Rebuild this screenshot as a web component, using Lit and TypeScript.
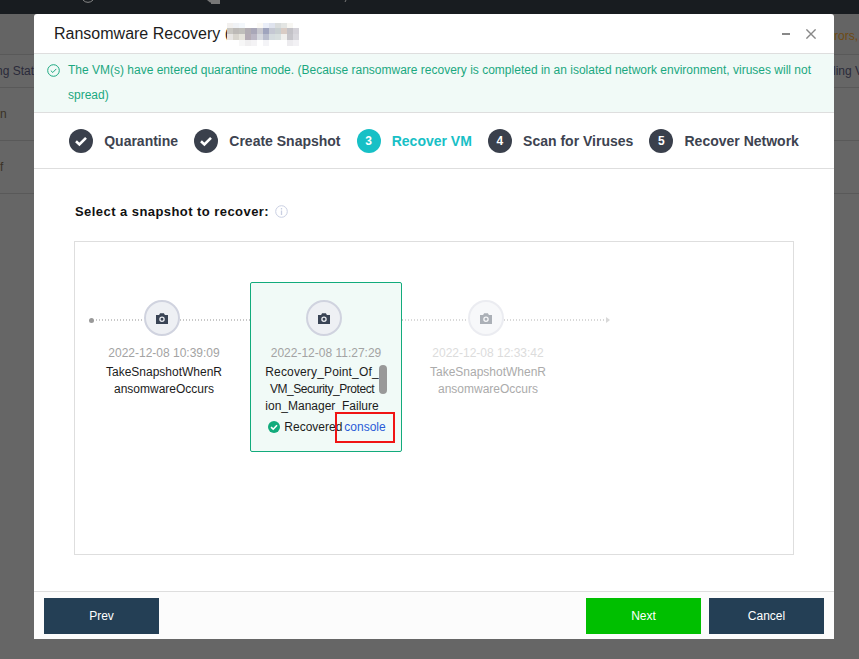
import { LitElement, html, css, svg } from "lit";
import { customElement } from "lit/decorators.js";

const MOSAIC = [
  ["#f2f0ee","#f0f2f5","#f3f7fb","#fff","#fff","#fbf9f5","#eaeef8","#dfe3ee","#d9dcdc","#e3e5e3","#f7f6f2","#fff"],
  ["#c9c7c2","#bdbab7","#c0bfbb","#b2adb3","#a9a7b8","#c7c7ce","#9fa4bd","#c5c8d3","#c8cfd1","#d9ccc5","#c3c2c7","#d4d2d8"],
  ["#e8e6e4","#d8d5ce","#e6e4dc","#b4acb5","#bbb7c5","#d6d9df","#b9bdcd","#d5dcdf","#d8dfdf","#f0f0ee","#c6c5ca","#d9d8dd"],
  ["#fff","#fff","#f7f7f7","#f0eff0","#f4f3f5","#fff","#f4f4f7","#fff","#fff","#fff","#ecebee","#f2f1f4"],
];

const camera = svg`<svg width="12" height="11" viewBox="0 0 14 12.8" preserveAspectRatio="none"><path fill="currentColor" fill-rule="evenodd" d="M0 2.2h3.6L4.8.3h4.4l1.2 1.9H14V12.8H0zM7 4a3.2 3.2 0 1 0 0 6.4A3.2 3.2 0 0 0 7 4zM7 5.5a1.7 1.7 0 1 1 0 3.4 1.7 1.7 0 0 1 0-3.4z"/></svg>`;

@customElement("app-root")
export class AppRoot extends LitElement {
  static styles = css`
    :host { display: block; position: relative; width: 859px; height: 659px; overflow: hidden; background: #666; font-family: "Liberation Sans", Arial, sans-serif; font-size: 12px; color: #222; }
    * { box-sizing: border-box; }
    .topbar { height: 14px; background: #181c20; }
    .topbar svg { display: block; }
    .bgrow { height: 53px; display: flex; justify-content: space-between; align-items: center; border-top: 1px solid #595959; font-size: 12px; white-space: nowrap; color: #2a2a3a; }
    .bgrow.first { height: 40px; border-top: 0; padding-top: 4px; background: #646464; }
    .bgrow.second { height: 33px; }
    .bgrow.last { height: 460px; }
    .cut-left { margin-left: -4px; }
    .errs { color: #6f4a12; margin-right: 1px; }
    .cut-right { margin-right: -4px; }
    .dim { color: #3a3226; }
    .modal { position: absolute; left: 34px; top: 14px; width: 800px; height: 625px; background: #fff; border-radius: 3px 3px 0 0; display: flex; flex-direction: column; }
    .head { height: 39px; display: flex; align-items: center; padding: 0 18px 0 20px; font-size: 16px; color: #1c1c1c; flex: none; }
    .title { white-space: nowrap; }
    .mosaic { display: grid; grid-template-columns: repeat(12, 6px); grid-auto-rows: 5.75px; margin: 1px 0 0 -3px; }
    .spacer { flex: 1; }
    .min { width: 8px; height: 2px; background: #888; margin-right: 16px; }
    .close { display: block; }
    .alert { height: 60px; flex: none; background: #f1faf7; border-top: 1px solid #dedede; border-bottom: 1px solid #dedede; padding: 4px 12px 0 13px; display: flex; gap: 8px; color: #1ba880; line-height: 25px; }
    .alert svg { flex: none; margin-top: 6px; }
    .alert p { margin: 0; }
    .steps { height: 56px; flex: none; border-bottom: 1px solid #dedede; display: flex; align-items: center; gap: 16px; padding: 0 0 0 35px; }
    .step { display: flex; align-items: center; gap: 11.2px; font-weight: 700; font-size: 14px; color: #3d4350; white-space: nowrap; }
    .step.on { color: #17c0c6; }
    .dot { width: 24px; height: 24px; border-radius: 50%; background: #3a404c; color: #fff; display: flex; align-items: center; justify-content: center; font-size: 12px; }
    .on .dot { background: #17c0c6; }
    .body { flex: 1; padding: 34px 40px 36px; display: flex; flex-direction: column; min-height: 0; }
    .sel { display: flex; align-items: center; gap: 6px; height: 17px; font-weight: 700; font-size: 13px; color: #111; letter-spacing: .44px; margin-left: 1px; }
    .box { margin-top: 21px; flex: 1; border: 1px solid #dedede; display: flex; align-items: flex-start; padding: 58px 0 0 6px; }
    .item { width: 162px; flex: none; position: relative; text-align: center; }
    .card { position: absolute; left: 7px; top: -18px; width: 152px; height: 170px; background: #f1faf7; border: 1px solid #12ab7c; border-radius: 2px; z-index: 0; }
    .headrow { display: flex; align-items: center; height: 36px; }
    .seg { flex: 1; height: 2px; margin-top: 4px; background-image: linear-gradient(90deg, #c8c8c8 50%, transparent 50%); background-size: 3px 2px; }
    .seg.first { flex: none; width: 48px; margin-left: 2px; }
    .start { width: 5px; height: 5px; border-radius: 50%; background: #999; margin: 4px 0 0 8px; flex: none; }
    .circle { position: relative; z-index: 1; width: 36px; height: 36px; flex: none; border-radius: 50%; border: 2px solid #d0d3df; background: #eef0f4; color: #3a4455; display: flex; align-items: center; justify-content: center; }
    .date { position: relative; z-index: 1; margin-top: 9px; padding-left: 4px; line-height: 17px; color: #a3a3a3; }
    .name { position: relative; z-index: 1; margin: 2px 20px 0 24px; width: 118px; line-height: 17px; color: #1c1c1c; word-break: break-all; }
    .name.tight { margin-left: 20px; margin-right: 24px; word-break: normal; white-space: nowrap; }
    .name.tight span { display: block; }
    .name.tight .l1 { letter-spacing: .15px; }
    .name.tight .l2 { letter-spacing: -.45px; }
    .thumb { position: absolute; z-index: 2; left: 136px; top: 65px; width: 8px; height: 29px; border-radius: 4px; background: #999; }
    .status { position: relative; z-index: 1; display: flex; justify-content: center; align-items: center; gap: 4px; padding-left: 6px; margin-top: 3px; height: 17px; white-space: nowrap; color: #1c1c1c; }
    .status a { color: #2a5bd7; margin-left: -2px; }
    .redbox { position: absolute; z-index: 2; left: 92px; top: 112px; width: 60px; height: 31px; border: 2px solid #f01414; }
    .faded .circle { opacity: .42; }
    .faded .seg { opacity: .7; }
    .faded .date { color: #dcdcdc; }
    .faded .name { color: #ababab; }
    .tail { flex: none; width: 43px; height: 36px; display: flex; align-items: center; padding-top: 4px; opacity: .7; }
    .tail .seg { margin-top: 0; }
    .arrow { width: 0; height: 0; border-left: 4px solid #c8c8c8; border-top: 3px solid transparent; border-bottom: 3px solid transparent; }
    .foot { height: 48px; flex: none; background: #fcfcfc; border-top: 1px solid #dedede; display: flex; align-items: flex-start; gap: 8px; padding: 6px 10px 0; }
    button { width: 115px; height: 36px; border: 0; padding: 0; background: #243f55; color: #fff; font: 12px "Liberation Sans", Arial, sans-serif; }
    button.next { background: #00bf00; }
  `;

  private check() {
    return svg`<svg width="14" height="12" viewBox="0 0 14 12"><path d="M2 6.2 5.4 9.4 12 2.8" fill="none" stroke="#fff" stroke-width="2.6"/></svg>`;
  }

  render() {
    return html`
      <div class="topbar">
        <svg width="859" height="14" viewBox="0 0 859 14">
          <path d="M83 0a6.5 6.5 0 0 0 10 0" fill="none" stroke="#888" stroke-width="1"/>
          <path d="M207 0l3 2.5h1V4h9V0z" fill="#777"/>
          <path d="M346 0l-1 2" stroke="#777" fill="none"/>
        </svg>
      </div>
      <div class="bgrow first"><span></span><span class="errs">rrors,</span></div>
      <div class="bgrow second"><span class="cut-left">ng Status</span><span class="cut-right">ling V</span></div>
      <div class="bgrow"><span class="dim">n</span></div>
      <div class="bgrow"><span class="dim">f</span></div>
      <div class="bgrow last"></div>

      <div class="modal">
        <div class="head">
          <span class="title">Ransomware Recovery (</span>
          <div class="mosaic">
            ${MOSAIC.flat().map((c) => html`<i style="background:${c}"></i>`)}
          </div>
          <div class="spacer"></div>
          <div class="min"></div>
          <svg class="close" width="10" height="10" viewBox="0 0 10 10"><path d="M.4.4l9.2 9.2M9.6.4.4 9.6" stroke="#888" stroke-width="1.4" fill="none"/></svg>
        </div>
        <div class="alert">
          <svg width="13" height="13" viewBox="0 0 13 13"><circle cx="6.5" cy="6.5" r="5.8" fill="none" stroke="#1ba880"/><path d="M3.8 6.6 5.8 8.5 9.3 4.9" fill="none" stroke="#1ba880"/></svg>
          <p>The VM(s) have entered quarantine mode. (Because ransomware recovery is completed in an isolated network environment, viruses will not spread)</p>
        </div>
        <div class="steps">
          <div class="step"><span class="dot">${this.check()}</span>Quarantine</div>
          <div class="step"><span class="dot">${this.check()}</span>Create Snapshot</div>
          <div class="step on"><span class="dot">3</span>Recover VM</div>
          <div class="step"><span class="dot">4</span>Scan for Viruses</div>
          <div class="step"><span class="dot">5</span>Recover Network</div>
        </div>
        <div class="body">
          <div class="sel">Select a snapshot to recover:
            <svg width="13" height="13" viewBox="0 0 13 13"><circle cx="6.5" cy="6.5" r="5.8" fill="none" stroke="#c9cfe2"/><path d="M6.5 3v1.4M6.5 5.6V10" stroke="#c9cfe2" stroke-width="1.3" fill="none"/></svg>
          </div>
          <div class="box">
            <div class="item">
              <div class="headrow"><span class="start"></span><span class="seg first"></span><span class="circle">${camera}</span><span class="seg"></span></div>
              <div class="date">2022-12-08 10:39:09</div>
              <div class="name">TakeSnapshotWhenRansomwareOccurs</div>
            </div>
            <div class="item">
              <div class="card"></div>
              <div class="headrow"><span class="seg"></span><span class="circle">${camera}</span><span class="seg"></span></div>
              <div class="date">2022-12-08 11:27:29</div>
              <div class="name tight"><span class="l1">Recovery_Point_Of_</span><span class="l2">VM_Security_Protect</span><span>ion_Manager_Failure</span></div>
              <div class="status">
                <svg width="12" height="12" viewBox="0 0 12 12"><circle cx="6" cy="6" r="6" fill="#12ab7c"/><path d="M3 6.2 5.2 8.2 9 4.2" fill="none" stroke="#fff" stroke-width="1.6"/></svg>
                <span>Recovered</span><a>console</a>
              </div>
              <div class="thumb"></div>
              <div class="redbox"></div>
            </div>
            <div class="item faded">
              <div class="headrow"><span class="seg"></span><span class="circle">${camera}</span><span class="seg"></span></div>
              <div class="date">2022-12-08 12:33:42</div>
              <div class="name">TakeSnapshotWhenRansomwareOccurs</div>
            </div>
            <div class="tail"><span class="seg"></span><span class="arrow"></span></div>
          </div>
        </div>
        <div class="foot">
          <button>Prev</button>
          <div class="spacer"></div>
          <button class="next">Next</button>
          <button>Cancel</button>
        </div>
      </div>
    `;
  }
}
